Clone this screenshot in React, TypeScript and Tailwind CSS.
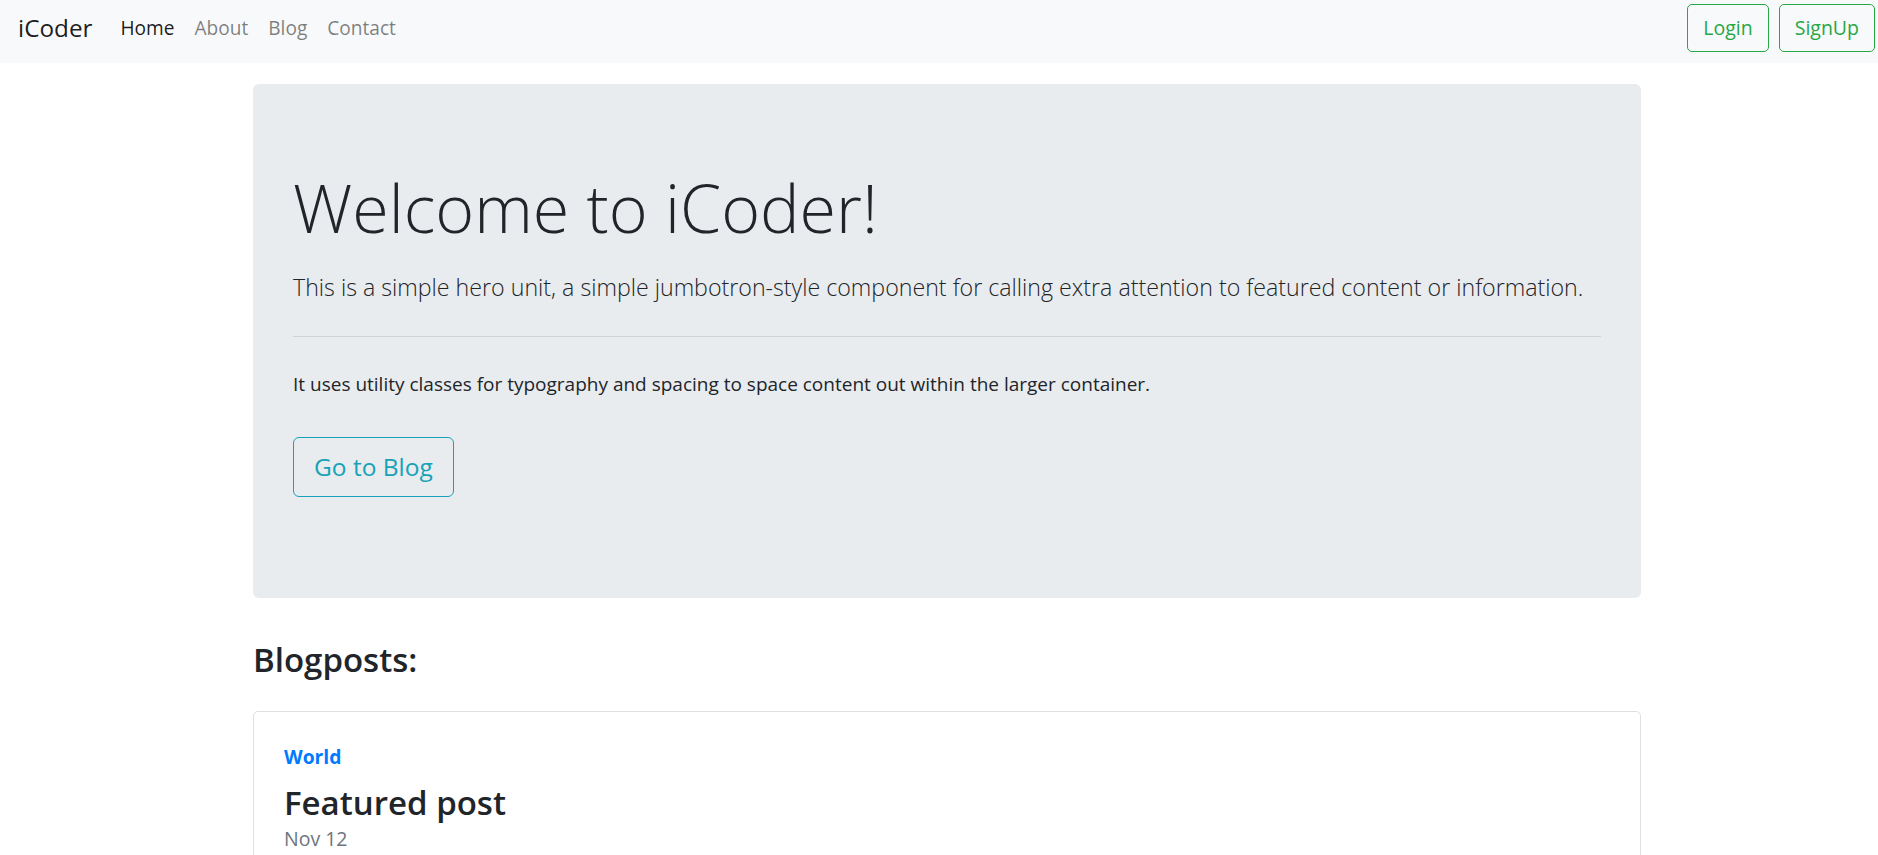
import React from "react";

const navLinks = [
  { label: "Home", active: true },
  { label: "About", active: false },
  { label: "Blog", active: false },
  { label: "Contact", active: false },
];

function Navbar() {
  return (
    <nav className="h-[63px] bg-[#f8f9fa] pt-[4px]">
      <div className="flex h-[48px] items-center pl-[18px] pr-[19px]">
        <a className="mr-[18px] text-[24.3px] leading-[37.5px] text-black/90">iCoder</a>
        <ul className="flex items-center">
          {navLinks.map((l) => (
            <li key={l.label}>
              <a
                className={
                  "block px-[10px] text-[19.1px] leading-[30px] " +
                  (l.active ? "text-black/90" : "text-black/50")
                }
              >
                {l.label}
              </a>
            </li>
          ))}
        </ul>
        <div className="ml-auto flex gap-[10px]">
          <button className="h-[48px] rounded-[5px] border border-[#28a745] px-[15px] text-[19.5px] leading-[30px] text-[#28a745]">
            Login
          </button>
          <button className="h-[48px] rounded-[5px] border border-[#28a745] px-[15px] text-[19.5px] leading-[30px] text-[#28a745]">
            SignUp
          </button>
        </div>
      </div>
    </nav>
  );
}

function Hero() {
  return (
    <div className="rounded-[6px] bg-[#e9ecef] px-[40px] pt-[81px] pb-[101px]">
      <h1 className="mb-[20px] text-[66.4px] font-light leading-[84px]">Welcome to iCoder!</h1>
      <p className="whitespace-nowrap text-[23.2px] font-light leading-[37.5px]">
        This is a simple hero unit, a simple jumbotron-style component for calling extra attention to
        featured content or information.
      </p>
      <hr className="mt-[29px] mb-[32px] border-0 border-t border-black/10" />
      <p className="text-[19px] leading-[30px]">
        It uses utility classes for typography and spacing to space content out within the larger
        container.
      </p>
      <div className="mt-[38px]">
        <a className="inline-block h-[60px] rounded-[6px] border border-[#17a2b8] px-[20px] text-[24.5px] leading-[58px] text-[#17a2b8]">
          Go to Blog
        </a>
      </div>
    </div>
  );
}

function PostCard() {
  return (
    <div className="rounded-[5px] border border-black/[0.125]">
      <div className="flex h-[250px] flex-col p-[30px]">
        <strong className="mb-[10px] inline-block text-[19.3px] font-bold leading-[30px] text-[#007bff]">
          World
        </strong>
        <h3 className="text-[33px] font-semibold leading-[42px]">Featured post</h3>
        <div className="mb-[5px] text-[19.5px] leading-[30px] text-[#6c757d]">Nov 12</div>
      </div>
    </div>
  );
}

export default function App() {
  return (
    <div className="w-full overflow-hidden bg-white font-['Open_Sans','Noto_Sans',sans-serif] text-[#212529]">
      <div className="w-[1894px]">
        <Navbar />
        <main className="mx-auto mt-[21px] w-[1388px]">
          <Hero />
          <h3 className="mt-[41px] mb-[30px] text-[33px] font-semibold leading-[42px]">Blogposts:</h3>
          <PostCard />
        </main>
      </div>
    </div>
  );
}
